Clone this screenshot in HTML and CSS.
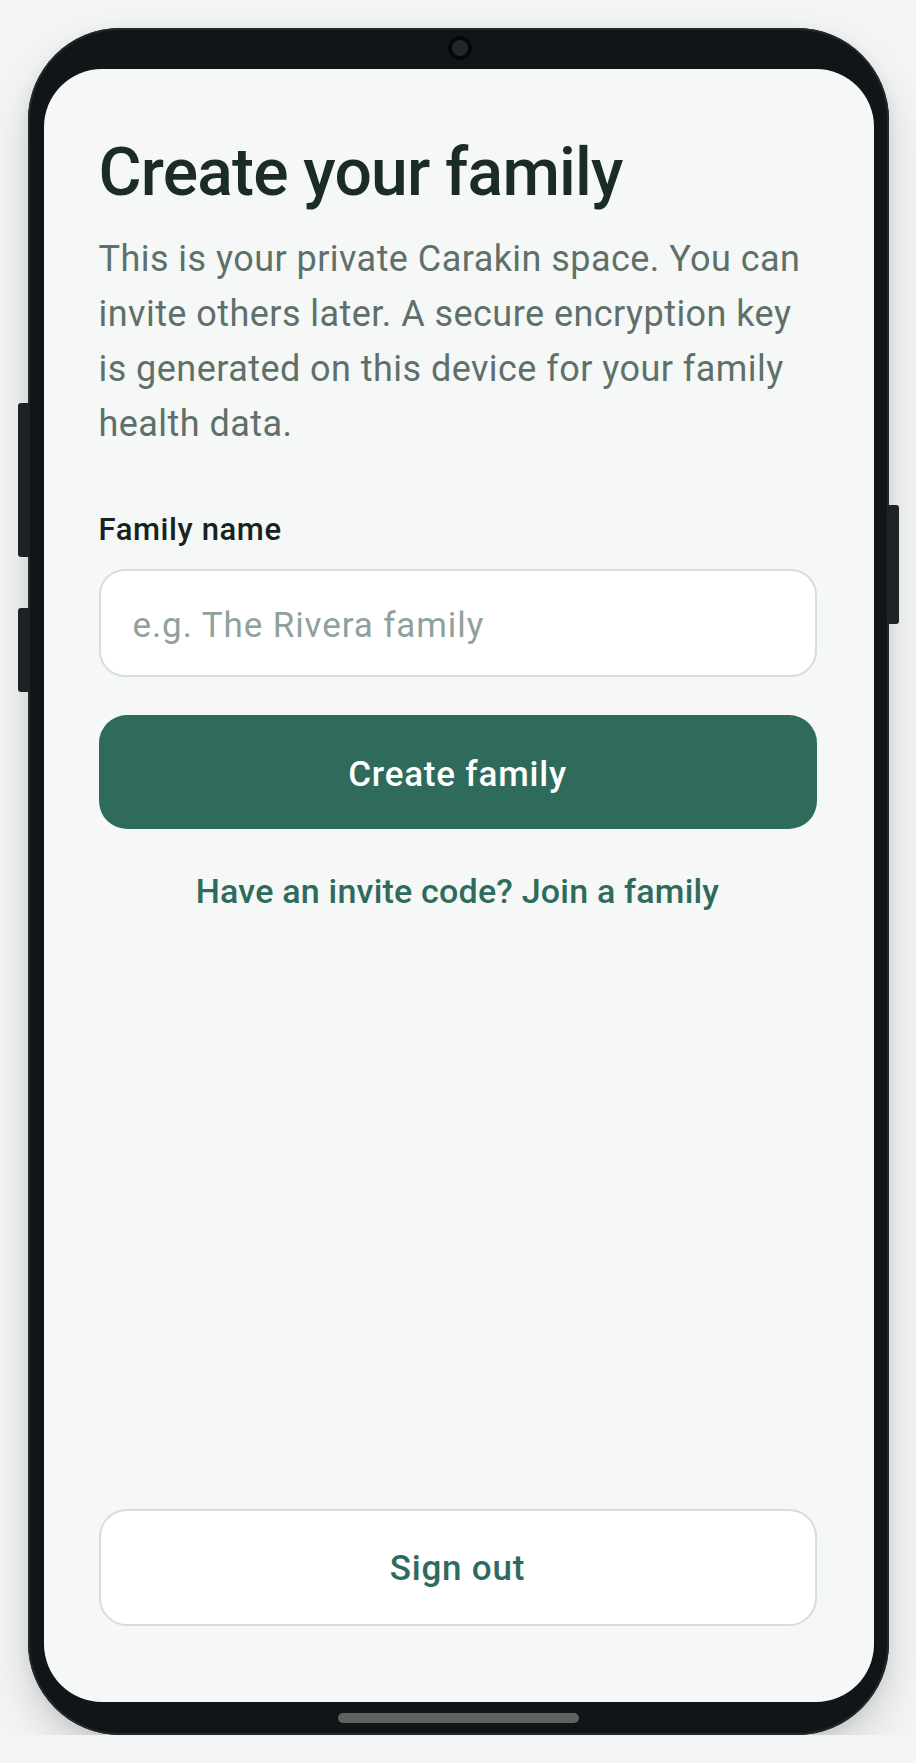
FILE: index.html
```html
<!DOCTYPE html>
<html lang="en">
<head>
  <meta charset="UTF-8" />
  <meta name="viewport" content="width=device-width, initial-scale=1.0" />
  <title>Create your family</title>
  <link rel="stylesheet" href="styles.css">
</head>
<body>
  <!-- phone mockup -->
  <div class="phone">
    <span class="side-btn side-btn--vol-up"></span>
    <span class="side-btn side-btn--vol-down"></span>
    <span class="side-btn side-btn--power"></span>
    <span class="camera"></span>

    <main class="screen">
      <h1 class="title">Create your family</h1>
      <p class="intro">This is your private Carakin space. You can invite others later. A secure encryption key is generated on this device for your family health data.</p>

      <form class="family-form">
        <label class="field-label" for="familyName">Family name</label>
        <input type="text" id="familyName" class="field-input" placeholder="e.g. The Rivera family" />
        <button type="submit" class="btn-primary">Create family</button>
      </form>

      <a href="#" class="join-link">Have an invite code? Join a family</a>

      <button type="button" class="btn-outline">Sign out</button>
    </main>

    <span class="home-bar"></span>
  </div>
</body>
</html>
```

FILE: styles.css
```css
/* page + phone frame */
body {
  margin: 0;
  background: #f3f4f4;
  font-family: Roboto, "Noto Sans", sans-serif;
}
.phone {
  position: relative;
  width: 861px;
  height: 1707px;
  margin: 28px auto 0;
  box-sizing: border-box;
  padding: 41px 15px 0 16px;
  background: #121518;
  border-radius: 92px;
  box-shadow: inset 0 0 0 2px #22282d, 0 22px 44px rgba(0,0,0,0.14), 0 4px 14px rgba(0,0,0,0.08);
  display: flex;
  flex-direction: column;
  align-items: center;
}
.camera {
  position: absolute;
  top: 8px;
  left: 420px;
  width: 16px;
  height: 16px;
  border: 4px solid #05070a;
  border-radius: 50%;
  background: #1f282e;
}
.side-btn {
  position: absolute;
  width: 12px;
  background: #1e2227;
  border-radius: 3px;
}
.side-btn--vol-up {
  left: -10px;
  top: 375px;
  height: 154px;
}
.side-btn--vol-down {
  left: -10px;
  top: 580px;
  height: 84px;
}
.side-btn--power {
  right: -10px;
  top: 477px;
  height: 119px;
}
.home-bar {
  width: 241px;
  height: 10px;
  margin-top: 11px;
  border-radius: 5px;
  background: #5b6461;
}

/* screen content */
.screen {
  width: 830px;
  height: 1633px;
  box-sizing: border-box;
  padding: 64px 57px 76px 55px;
  background: #f5f8f7;
  border-radius: 58px;
  display: flex;
  flex-direction: column;
}
.title {
  margin: 0;
  font-size: 66px;
  font-weight: 500;
  line-height: 1.2;
  letter-spacing: -0.8px;
  color: #1b2b26;
}
.intro {
  margin: 20px 0 0;
  font-size: 36px;
  line-height: 55px;
  letter-spacing: 0.45px;
  color: #5f706a;
}
.family-form {
  display: flex;
  flex-direction: column;
  margin-top: 59px;
}
.field-label {
  font-size: 31px;
  font-weight: 500;
  line-height: 1.2;
  letter-spacing: 0.6px;
  color: #17231f;
}
.field-input {
  height: 108px;
  margin-top: 21px;
  box-sizing: border-box;
  padding: 4px 32px 0;
  border: 2px solid #d6dedb;
  border-radius: 26px;
  background: #fff;
  font-family: inherit;
  font-size: 35px;
  letter-spacing: 0.9px;
  color: #1b2b26;
  outline: none;
}
.field-input::placeholder {
  color: #8ea29b;
}
.btn-primary {
  height: 114px;
  margin-top: 38px;
  padding-top: 5px;
  border: none;
  border-radius: 28px;
  background: #2f6b5c;
  color: #fff;
  font-family: inherit;
  font-size: 35px;
  font-weight: 500;
  letter-spacing: 0.8px;
  cursor: pointer;
}
.join-link {
  margin-top: 42px;
  align-self: center;
  font-size: 34px;
  font-weight: 500;
  line-height: 40px;
  letter-spacing: 0.2px;
  color: #2f6b5c;
  text-decoration: none;
}
.btn-outline {
  margin-top: auto;
  height: 117px;
  padding-top: 3px;
  border: 2px solid #d6dedb;
  border-radius: 28px;
  background: #fff;
  color: #2f6b5c;
  font-family: inherit;
  font-size: 35px;
  font-weight: 500;
  letter-spacing: 0.8px;
  cursor: pointer;
}
```
